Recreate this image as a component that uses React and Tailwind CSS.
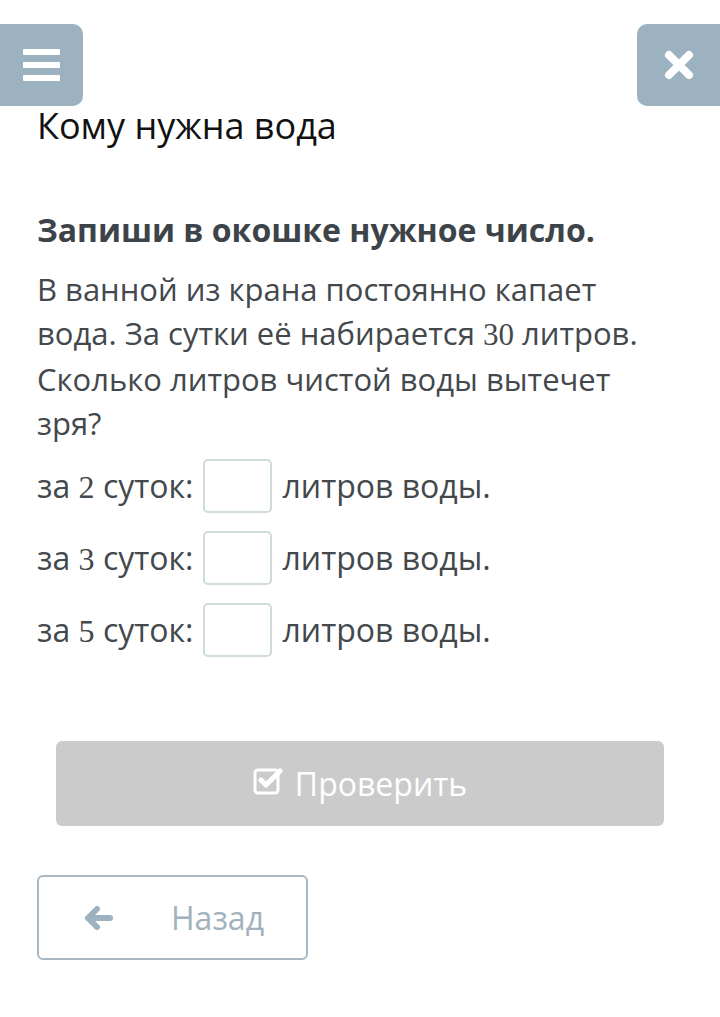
import React from "react";

const serif = { fontFamily: '"Liberation Serif", "DejaVu Serif", serif' };

function Row({ n }) {
  return (
    <div className="flex items-center h-[72px]">
      <span>
        за <span style={serif}>{n}</span> суток:
      </span>
      <div className="ml-[10px] mr-[10px] w-[69px] h-[54px] rounded-[5px] border-2 border-[#cfdcdc] bg-white" />
      <span>литров воды.</span>
    </div>
  );
}

export default function App() {
  return (
    <div className="w-[720px] h-[1017px] bg-white overflow-hidden" style={{ fontFamily: '"Open Sans", "Noto Sans", sans-serif' }}>
      <div className="flex justify-between pt-[24px]">
        <div className="w-[83px] h-[82px] bg-[#9cb2c0] rounded-r-[10px] flex items-center justify-center">
          <div className="flex flex-col gap-[7px]">
            <div className="w-[37px] h-[6px] bg-white rounded-[1px]" />
            <div className="w-[37px] h-[6px] bg-white rounded-[1px]" />
            <div className="w-[37px] h-[6px] bg-white rounded-[1px]" />
          </div>
        </div>
        <div className="w-[83px] h-[82px] bg-[#9cb2c0] rounded-l-[10px] flex items-center justify-center">
          <svg width="32" height="32" viewBox="0 0 32 32">
            <path d="M6 6 L26 26 M26 6 L6 26" stroke="white" strokeWidth="8" strokeLinecap="round" />
          </svg>
        </div>
      </div>
      <div className="px-[37px]">
        <h1 className="text-[36px] leading-[40px] text-[#111]">Кому нужна вода</h1>
        <p className="mt-[64px] text-[32px] leading-[40px] font-bold text-[#3d4449]">Запиши в окошке нужное число.</p>
        <p className="mt-[17px] pr-[12px] text-[31px] leading-[44px] text-[#43484c]">
          В ванной из крана постоянно капает вода. За сутки её набирается <span style={serif}>30</span> литров. Сколько литров чистой воды вытечет зря?
        </p>
        <div className="mt-[5px] text-[32px] text-[#43484c]">
          <Row n="2" />
          <Row n="3" />
          <Row n="5" />
        </div>
      </div>
      <div className="px-[56px] mt-[75px]">
        <div className="h-[85px] bg-[#cbcbcb] rounded-[6px] flex items-center justify-center text-white text-[32px]">
          <svg width="30" height="30" viewBox="0 0 30 30" className="mr-[12px] -mt-[6px]">
            <rect x="2" y="4" width="23" height="23" rx="3" fill="none" stroke="white" strokeWidth="3" />
            <path d="M8 14 L13 19 L27 5" fill="none" stroke="white" strokeWidth="5" strokeLinecap="round" strokeLinejoin="round" />
          </svg>
          <span>Проверить</span>
        </div>
      </div>
      <div className="px-[37px] mt-[49px]">
        <div className="w-[271px] h-[85px] border-2 border-[#a8b8c2] rounded-[6px] flex items-center">
          <svg width="30" height="24" viewBox="0 0 30 24" className="ml-[45px]">
            <path d="M13 3 L4 12 L13 21 M4 12 L26 12" fill="none" stroke="#9cb2c0" strokeWidth="6" strokeLinecap="round" strokeLinejoin="round" />
          </svg>
          <span className="ml-[57px] text-[32px] text-[#a1b2bd]">Назад</span>
        </div>
      </div>
    </div>
  );
}
